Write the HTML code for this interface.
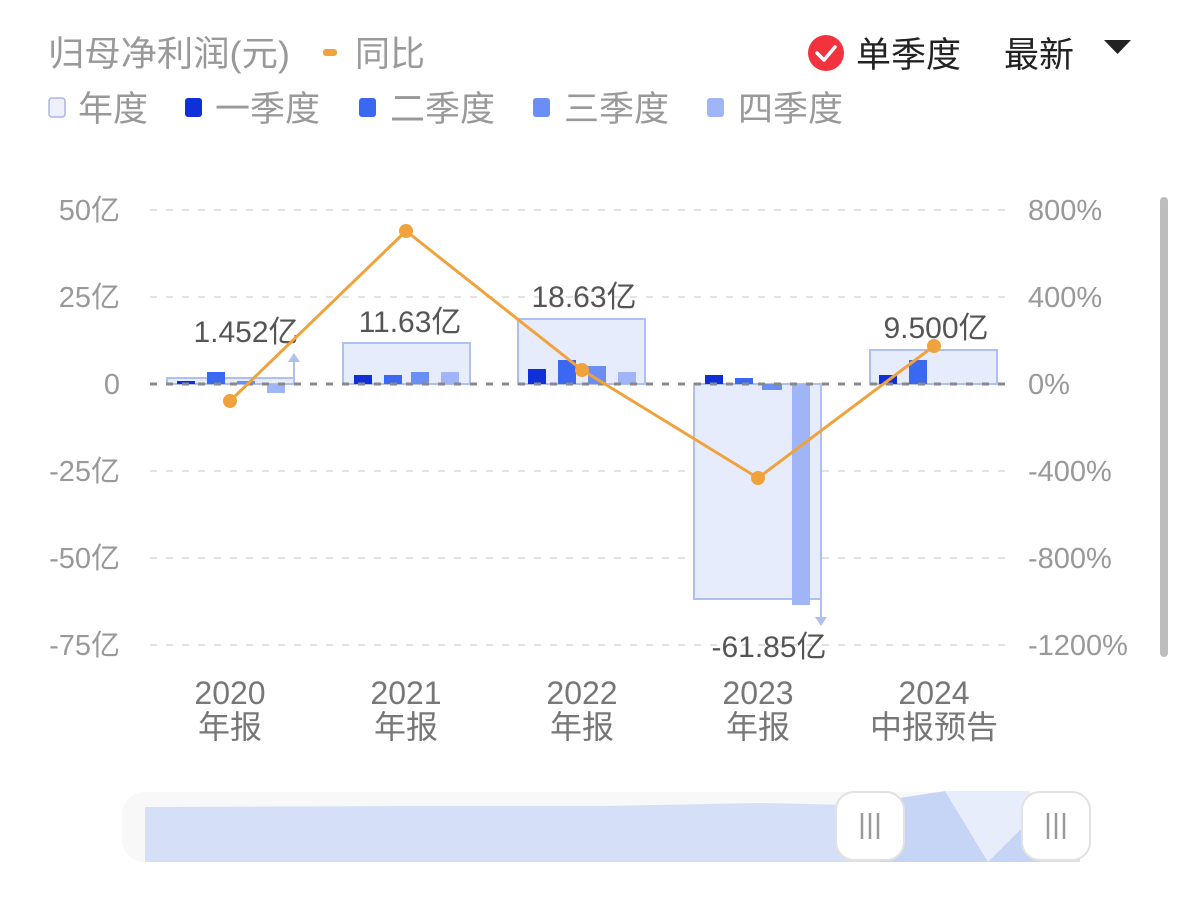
<!DOCTYPE html>
<html><head><meta charset="utf-8">
<style>
html,body{margin:0;padding:0;background:#fff;width:1179px;height:902px;overflow:hidden}
svg{display:block}
text{font-family:"Liberation Sans","Noto Sans CJK SC",sans-serif}
</style></head><body>
<svg width="1179" height="902" viewBox="0 0 1179 902" xmlns="http://www.w3.org/2000/svg">
<!-- header -->
<text x="48" y="66" font-size="35" fill="#999" textLength="242" lengthAdjust="spacingAndGlyphs">归母净利润(元)</text>
<rect x="323" y="49" width="14" height="7" rx="3" fill="#f0a23c"/>
<text x="355" y="66" font-size="35" fill="#999">同比</text>
<circle cx="826" cy="53" r="18" fill="#f2323c"/>
<path d="M817 53 L824 60 L835 47" stroke="#fff" stroke-width="3.5" fill="none" stroke-linecap="round" stroke-linejoin="round"/>
<text x="856" y="67" font-size="35" fill="#222">单季度</text>
<text x="1004" y="67" font-size="35" fill="#222">最新</text>
<path d="M1104 40 L1131 40 L1117.5 54 Z" fill="#222"/>
<!-- legend -->
<rect x="49" y="98" width="16" height="19" rx="3" fill="#eef1fc" stroke="#a9b6e6" stroke-width="1.5"/>
<text x="78" y="121" font-size="35" fill="#999">年度</text>
<rect x="185" y="98" width="17" height="19" rx="3" fill="#0f2fd9"/>
<text x="215" y="121" font-size="35" fill="#999">一季度</text>
<rect x="359" y="98" width="17" height="19" rx="3" fill="#3a68f0"/>
<text x="390" y="121" font-size="35" fill="#999">二季度</text>
<rect x="533" y="98" width="17" height="19" rx="3" fill="#6b8ef5"/>
<text x="564" y="121" font-size="35" fill="#999">三季度</text>
<rect x="707" y="98" width="17" height="19" rx="3" fill="#9fb5f8"/>
<text x="738" y="121" font-size="35" fill="#999">四季度</text>
<!-- grid -->
<g stroke="#e2e2e2" stroke-width="2" stroke-dasharray="7,9">
<line x1="150" y1="210" x2="1012" y2="210"/>
<line x1="150" y1="297" x2="1012" y2="297"/>
<line x1="150" y1="471" x2="1012" y2="471"/>
<line x1="150" y1="558" x2="1012" y2="558"/>
<line x1="150" y1="645" x2="1012" y2="645"/>
</g>
<g font-size="29" fill="#999" text-anchor="end">
<text x="120" y="220">50亿</text>
<text x="120" y="307">25亿</text>
<text x="120" y="394">0</text>
<text x="120" y="481">-25亿</text>
<text x="120" y="568">-50亿</text>
<text x="120" y="655">-75亿</text>
</g>
<g font-size="29" fill="#999">
<text x="1028" y="220">800%</text>
<text x="1028" y="307">400%</text>
<text x="1028" y="394">0%</text>
<text x="1028" y="481">-400%</text>
<text x="1028" y="568">-800%</text>
<text x="1028" y="655">-1200%</text>
</g>
<!-- annual rects -->
<g fill="#e7ecfc" stroke="#aebff2" stroke-width="2">
<rect x="167" y="378" width="127" height="6"/>
<rect x="343" y="343" width="127" height="41"/>
<rect x="518" y="319" width="127" height="65"/>
<rect x="694" y="384" width="127" height="215"/>
<rect x="870" y="350" width="127" height="34"/>
</g>
<!-- quarter bars -->
<g>
<rect x="177" y="381" width="18" height="3" fill="#0f2fd9"/>
<rect x="207" y="372" width="18" height="12" fill="#3a68f0"/>
<rect x="237" y="381" width="18" height="3" fill="#6b8ef5"/>
<rect x="267" y="384" width="18" height="9" fill="#9fb5f8"/>
<rect x="354" y="375" width="18" height="9" fill="#0f2fd9"/>
<rect x="384" y="375" width="18" height="9" fill="#3a68f0"/>
<rect x="411" y="372" width="18" height="12" fill="#6b8ef5"/>
<rect x="441" y="372" width="18" height="12" fill="#9fb5f8"/>
<rect x="528" y="369" width="18" height="15" fill="#0f2fd9"/>
<rect x="558" y="360" width="18" height="24" fill="#3a68f0"/>
<rect x="588" y="366" width="18" height="18" fill="#6b8ef5"/>
<rect x="618" y="372" width="18" height="12" fill="#9fb5f8"/>
<rect x="705" y="375" width="18" height="9" fill="#0f2fd9"/>
<rect x="735" y="378" width="18" height="6" fill="#3a68f0"/>
<rect x="762" y="384" width="20" height="6" fill="#6b8ef5"/>
<rect x="792" y="384" width="18" height="221" fill="#9fb5f8"/>
<rect x="879" y="375" width="18" height="9" fill="#0f2fd9"/>
<rect x="909" y="360" width="18" height="24" fill="#3a68f0"/>
</g>
<!-- arrows -->
<g stroke="#aebff2" stroke-width="2" fill="#aebff2">
<line x1="294" y1="378" x2="294" y2="360"/>
<path d="M288 362 L294 353 L300 362 Z" stroke="none"/>
<line x1="821" y1="599" x2="821" y2="618"/>
<path d="M815 617 L821 626 L827 617 Z" stroke="none"/>
</g>
<!-- zero line -->
<line x1="150" y1="384" x2="1012" y2="384" stroke="#888" stroke-width="3" stroke-dasharray="7,9"/>
<!-- value labels -->
<g font-size="30" fill="#555" text-anchor="middle">
<text x="246" y="342">1.452亿</text>
<text x="410" y="332">11.63亿</text>
<text x="584" y="307">18.63亿</text>
<text x="769" y="657">-61.85亿</text>
<text x="936" y="338">9.500亿</text>
</g>
<!-- line -->
<polyline points="230,401 406,231 582,370 758,478 934,346" fill="none" stroke="#f0a23c" stroke-width="3"/>
<g fill="#f0a23c">
<circle cx="230" cy="401" r="7"/><circle cx="406" cy="231" r="7"/><circle cx="582" cy="370" r="7"/><circle cx="758" cy="478" r="7"/><circle cx="934" cy="346" r="7"/>
</g>
<!-- x labels -->
<g font-size="32" fill="#777" text-anchor="middle">
<text x="230" y="704">2020</text><text x="230" y="738">年报</text>
<text x="406" y="704">2021</text><text x="406" y="738">年报</text>
<text x="582" y="704">2022</text><text x="582" y="738">年报</text>
<text x="758" y="704">2023</text><text x="758" y="738">年报</text>
<text x="934" y="704">2024</text><text x="934" y="738">中报预告</text>
</g>
<!-- scrollbar -->
<rect x="1160" y="197" width="8" height="460" rx="4" fill="#bdbdbd"/>
<!-- slider -->
<rect x="122" y="792" width="968" height="70" rx="22" fill="#f8f8f8"/>
<path d="M145 807 L400 806 L600 806 L760 803 L900 806 L925 798 L1000 799 L1080 803 L1080 862 L145 862 Z" fill="#d5e0f8"/>
<path d="M880 862 L880 801 L945 791 L988 862 Z" fill="#c6d4f5"/>
<path d="M945 791 L1030 791 L1030 862 L988 862 Z" fill="#e8edfb"/>
<path d="M988 862 L1030 820 L1040 862 Z" fill="#c6d4f5"/>
<rect x="836" y="792" width="68" height="68" rx="18" fill="#fff" stroke="#e2e2e2" stroke-width="2"/>
<rect x="1022" y="792" width="68" height="68" rx="18" fill="#fff" stroke="#e2e2e2" stroke-width="2"/>
<g stroke="#999" stroke-width="2.5">
<line x1="862" y1="813" x2="862" y2="839"/><line x1="870" y1="813" x2="870" y2="839"/><line x1="878" y1="813" x2="878" y2="839"/>
<line x1="1048" y1="813" x2="1048" y2="839"/><line x1="1056" y1="813" x2="1056" y2="839"/><line x1="1064" y1="813" x2="1064" y2="839"/>
</g>
</svg>
</body></html>
